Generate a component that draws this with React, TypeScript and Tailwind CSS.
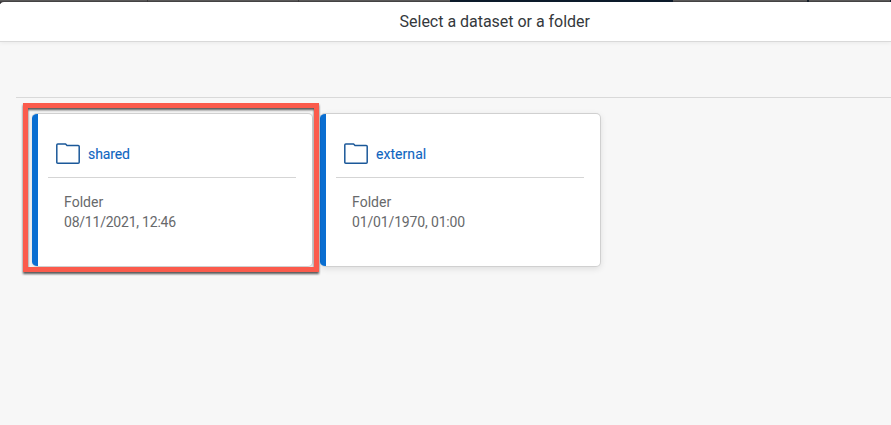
import React from "react";

function FolderIcon() {
  return (
    <svg width="24" height="22" viewBox="0 0 24 22" fill="none" stroke="#1b5899" strokeWidth="1.5" strokeLinejoin="round">
      <path d="M.8 2Q.8 1 1.8 1H9.6L11 2.5H22.2Q23.2 2.5 23.2 3.5V19.3Q23.2 20.3 22.2 20.3H1.8Q.8 20.3.8 19.3Z" />
    </svg>
  );
}

type CardProps = { name: string; date: string; nameSpacing: string; dateSpacing: string };

function FolderCard({ name, date, nameSpacing, dateSpacing }: CardProps) {
  return (
    <article className="flex h-[154px] w-[281px] shrink-0 overflow-hidden rounded-[5px] border border-l-0 border-[#d0d0d0] bg-white shadow-[0_2px_6px_rgba(0,0,0,0.10)]">
      <div className="-my-px w-1.5 shrink-0 bg-[#0a6ed1]" />
      <div className="ml-2.5 w-[248px]">
        <div className="flex h-16 items-start gap-2 border-b border-[#d5d5d5] pl-2 pt-[29px]">
          <FolderIcon />
          <span className={`text-[14px] leading-[22px] text-[#0f66bf] [-webkit-text-stroke:0.1px] ${nameSpacing}`}>{name}</span>
        </div>
        <div className="pl-4 pt-[14px] text-[14px] leading-5 text-[#67696b]">
          <p className="tracking-[0.04px]">Folder</p>
          <p className={dateSpacing}>{date}</p>
        </div>
      </div>
    </article>
  );
}

export default function App() {
  return (
    <div className="relative h-[425px] w-[891px] overflow-hidden bg-[#f7f7f7] font-['Roboto','Liberation_Sans',sans-serif]">
      <div className="flex h-1 w-full bg-[#5a5959]">
        <div className="h-1 w-[148px] shrink-0 border-r border-[#3b3b3b] bg-[linear-gradient(#5a5959_1px,#302e31_2px)]" />
        <div className="h-1 w-[151px] shrink-0 border-r border-[#3b3b3b] bg-[linear-gradient(#5a5959_1px,#302e31_2px)]" />
        <div className="h-1 w-[151px] shrink-0 bg-[linear-gradient(#5a5959_1px,#302e31_2px)]" />
        <div className="h-1 w-[223px] shrink-0 bg-[#0d1b2b]" />
        <div className="h-1 w-[136px] shrink-0 border-r-2 border-[#16202b] bg-[linear-gradient(#5a5959_1px,#302e31_2px)]" />
        <div className="h-1 grow border-r border-[#16202b] bg-[linear-gradient(#5a5959_1px,#302e31_2px)]" />
      </div>
      <header className="relative -mt-0.5 h-10 rounded-tl border-b border-[#d9d9d9] bg-white shadow-[0_1px_4px_rgba(0,0,0,0.06)]">
        <h1 className="pl-[399.6px] pt-2 text-[16px] leading-6 tracking-[-0.02px] text-[#34383c]">Select a dataset or a folder</h1>
      </header>
      <main className="pl-4 pt-[55px]">
        <div className="border-t border-[#d9d9d9] pl-4 pt-[15px]">
          <div className="flex gap-[7px]">
            <FolderCard name="shared" date="08/11/2021, 12:46" nameSpacing="tracking-[-0.1px]" dateSpacing="tracking-[-0.22px]" />
            <FolderCard name="external" date="01/01/1970, 01:00" nameSpacing="tracking-[0.05px]" dateSpacing="tracking-[-0.15px]" />
          </div>
        </div>
      </main>
      <div className="pointer-events-none absolute left-[23px] top-[103px] h-[169px] w-[296px] border-[5px] border-[#fb5b4c] [filter:drop-shadow(0_2px_1px_rgba(0,0,0,0.65))]" />
    </div>
  );
}
